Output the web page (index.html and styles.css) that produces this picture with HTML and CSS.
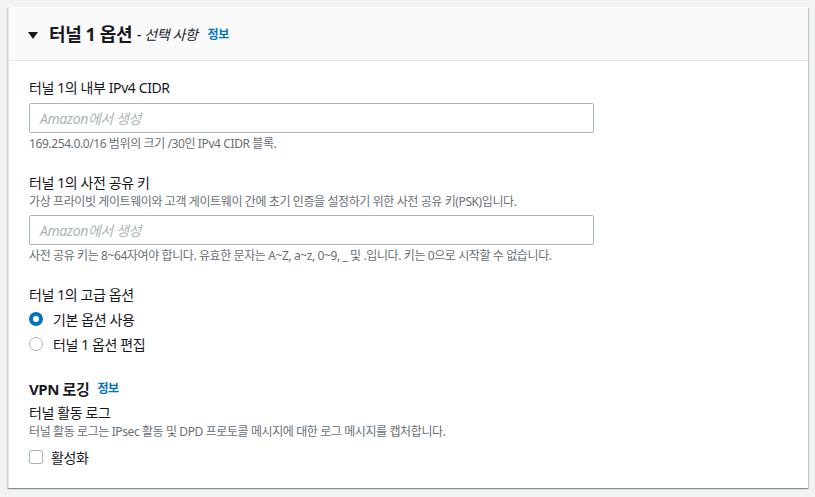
FILE: index.html
```html
<!DOCTYPE html>
<html lang="ko">
<head>
<meta charset="utf-8">
<link rel="stylesheet" href="styles.css">
</head>
<body>
<div class="card">
  <div class="card-header">
    <svg class="caret" width="10" height="7" viewBox="0 0 10 7"><path d="M0 0 H10 L5 7 Z" fill="#16191f"/></svg>
    <h2 class="title">터널 1 옵션</h2>
    <span class="optional">- 선택 사항</span>
    <a class="info">정보</a>
  </div>
  <div class="card-body">
    <div class="field">
      <div class="label">터널 1의 내부 IPv4 CIDR</div>
      <div class="input"><span class="placeholder">Amazon에서 생성</span></div>
      <div class="hint">169.254.0.0/16 범위의 크기 /30인 IPv4 CIDR 블록.</div>
    </div>
    <div class="field">
      <div class="label">터널 1의 사전 공유 키</div>
      <div class="desc">가상 프라이빗 게이트웨이와 고객 게이트웨이 간에 초기 인증을 설정하기 위한 사전 공유 키(PSK)입니다.</div>
      <div class="input"><span class="placeholder">Amazon에서 생성</span></div>
      <div class="hint">사전 공유 키는 8~64자여야 합니다. 유효한 문자는 A~Z, a~z, 0~9, _ 및 .입니다. 키는 0으로 시작할 수 없습니다.</div>
    </div>
    <div class="field">
      <div class="label">터널 1의 고급 옵션</div>
      <div class="radio-row"><span class="radio checked"></span><span>기본 옵션 사용</span></div>
      <div class="radio-row"><span class="radio"></span><span>터널 1 옵션 편집</span></div>
    </div>
    <div class="section">
      <div class="section-title"><span>VPN 로깅</span><a class="info">정보</a></div>
      <div class="label">터널 활동 로그</div>
      <div class="desc">터널 활동 로그는 IPsec 활동 및 DPD 프로토콜 메시지에 대한 로그 메시지를 캡처합니다.</div>
      <div class="check-row"><span class="checkbox"></span><span>활성화</span></div>
    </div>
  </div>
</div>
</body>
</html>
```

FILE: styles.css
```css
html, body {
  margin: 0;
  background: #f2f3f3;
}
body {
  padding: 7px 7px 7px 8px;
  font-family: "Noto Sans", "Noto Sans CJK KR", sans-serif;
  color: #16191f;
  letter-spacing: -0.025em;
}
.card {
  background: #fff;
  border-left: 1px solid #e4e7e8;
  box-shadow: 0 1px 1px 0 rgba(0,28,36,0.3), 1px 1px 1px 0 rgba(0,28,36,0.15), -1px 1px 1px 0 rgba(0,28,36,0.1);
}
.card-header {
  height: 54px;
  box-sizing: border-box;
  background: #fafafa;
  border-bottom: 1px solid #eaeded;
  display: flex;
  align-items: center;
  padding: 0 19px;
}
.caret {
  margin-top: 3px;
  margin-right: 11px;
}
.title {
  margin: 0;
  font-size: 18px;
  font-weight: 700;
  line-height: 22px;
}
.optional {
  font-size: 14px;
  font-style: italic;
  margin-left: 5px;
  margin-top: 1px;
}
.info {
  color: #0073bb;
  font-size: 12px;
  font-weight: 700;
  margin-left: 10px;
}
.card-body {
  padding: 16px 20px 19px 20px;
}
.field {
  margin-bottom: 20px;
}
.label {
  font-size: 14px;
  line-height: 22px;
}
.desc, .hint {
  font-size: 12px;
  line-height: 16px;
  color: #687078;
}
.hint {
  margin-top: 3px;
}
.input {
  width: 565px;
  height: 30px;
  box-sizing: border-box;
  border: 1px solid #aab7b8;
  border-radius: 2px;
  margin-top: 4px;
  padding: 0 10px;
  display: flex;
  align-items: center;
}
.desc + .input {
  margin-top: 5px;
}
.placeholder {
  color: #aab7b8;
  font-style: italic;
  font-size: 14px;
}
.radio-row, .check-row {
  display: flex;
  align-items: center;
  height: 25px;
  font-size: 14px;
}
.radio-row:first-of-type {
  margin-top: 2px;
}
.radio {
  width: 14px;
  height: 14px;
  box-sizing: border-box;
  border: 1px solid #aab7b8;
  border-radius: 50%;
  margin: 0 10px 0 0;
}
.radio.checked {
  border: 4px solid #0073bb;
}
.section {
  margin-top: 22px;
}
.section-title {
  display: flex;
  align-items: center;
  font-size: 15px;
  font-weight: 700;
  line-height: 22px;
  margin-bottom: 2px;
}
.section-title .info {
  margin-left: 8px;
}
.check-row {
  margin-top: 4px;
}
.checkbox {
  width: 14px;
  height: 14px;
  box-sizing: border-box;
  border: 1px solid #aab7b8;
  border-radius: 2px;
  margin-right: 8px;
}
```
